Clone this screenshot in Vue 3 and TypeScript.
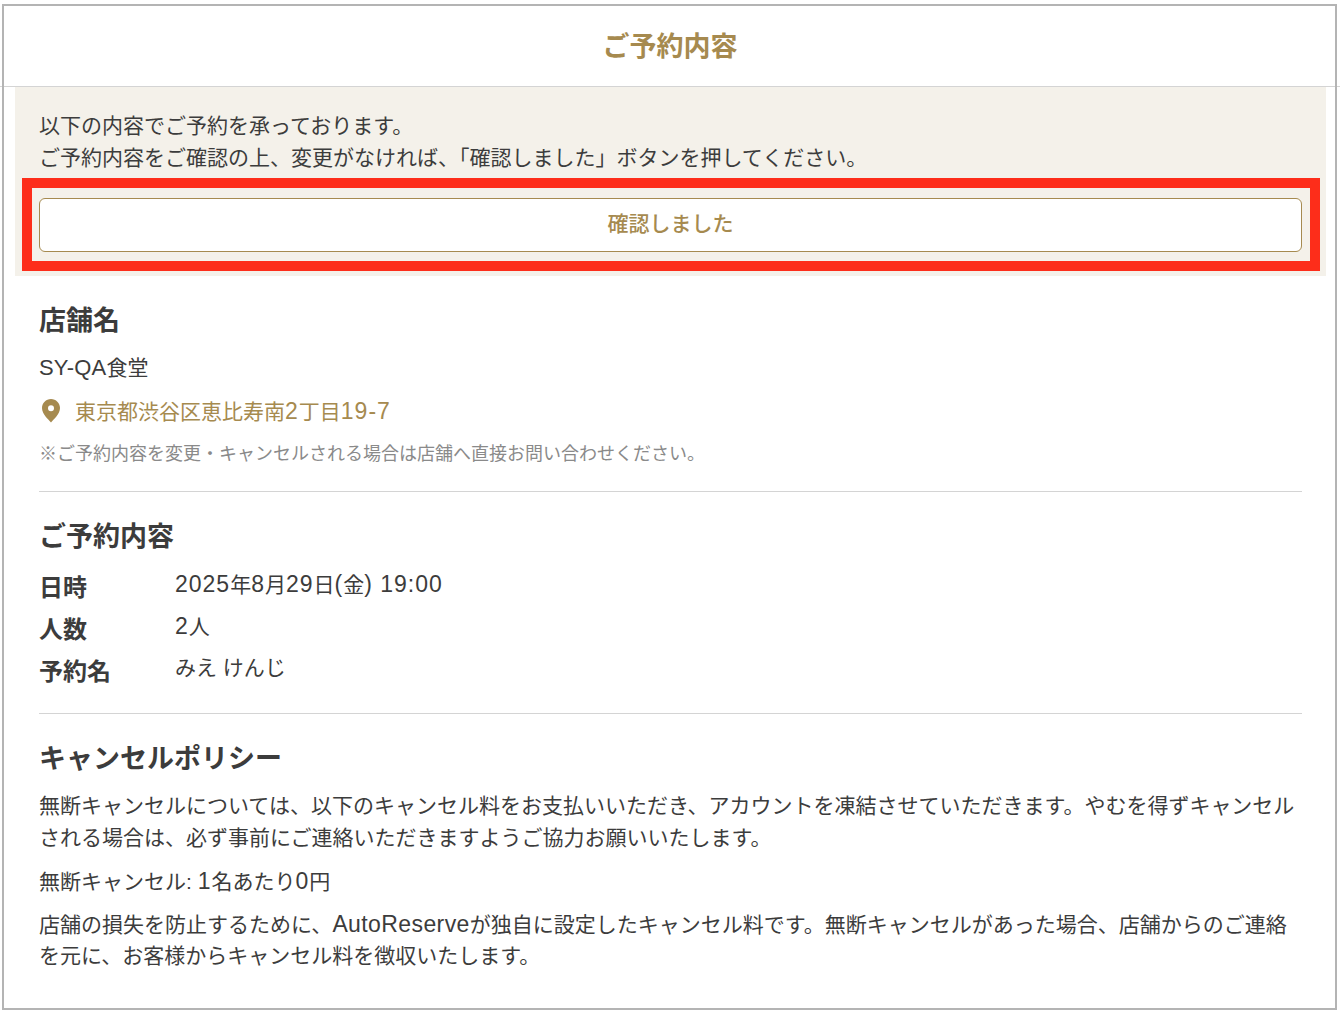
<script setup lang="ts">
const title: string = 'ご予約内容'
</script>

<template>
  <div class="page">
    <div class="frame"></div>
    <header class="title-bar"><h1>{{ title }}</h1></header>
    <section class="banner">
      <p class="banner-text">以下の内容でご予約を承っております。<br />ご予約内容をご確認の上、変更がなければ、「確認しました」ボタンを押してください。</p>
      <div class="highlight">
        <button class="confirm" type="button">確認しました</button>
      </div>
    </section>
    <main class="content">
      <section class="shop">
        <h2>店舗名</h2>
        <p class="shop-name"><span class="latin">SY-QA</span>食堂</p>
        <div class="address">
          <svg width="20" height="25" viewBox="0 0 20 25" aria-hidden="true">
            <path fill-rule="evenodd" fill="#a68a4f" d="M10 1C5 1 1 5 1 10c0 6 6.500 11.500 9 14.500C12.500 21.500 19 16 19 10c0-5-4-9-9-9zm0 6.200a3 3 0 1 1 0 6 3 3 0 0 1 0-6z" />
          </svg>
          <span>東京都渋谷区恵比寿南<span class="num">2</span>丁目<span class="num">19-7</span></span>
        </div>
        <p class="note">※ご予約内容を変更・キャンセルされる場合は店舗へ直接お問い合わせください。</p>
      </section>
      <section class="details">
        <h2>{{ title }}</h2>
        <dl class="rows">
          <div class="row">
            <dt>日時</dt>
            <dd><span class="num">2025</span>年<span class="num">8</span>月<span class="num">29</span>日<span class="num">(</span>金<span class="num">) 19:00</span></dd>
          </div>
          <div class="row">
            <dt>人数</dt>
            <dd><span class="num">2</span>人</dd>
          </div>
          <div class="row">
            <dt>予約名</dt>
            <dd class="name">みえ けんじ</dd>
          </div>
        </dl>
      </section>
      <section class="policy">
        <h2>キャンセルポリシー</h2>
        <p class="para">無断キャンセルについては、以下のキャンセル料をお支払いいただき、アカウントを凍結させていただきます。やむを得ずキャンセルされる場合は、必ず事前にご連絡いただきますようご協力お願いいたします。</p>
        <p class="para fee">無断キャンセル: <span class="num">1</span>名あたり<span class="num">0</span>円</p>
        <p class="para tail">店舗の損失を防止するために、<span class="word">AutoReserve</span>が独自に設定したキャンセル料です。無断キャンセルがあった場合、店舗からのご連絡<br />を元に、お客様からキャンセル料を徴収いたします。</p>
      </section>
    </main>
  </div>
</template>

<style scoped>
.page {
  position: relative;
  width: 1340px;
  height: 1012px;
  overflow: hidden;
  background: #fff;
  color: #3c3c3c;
  font-family: "Liberation Sans", "Noto Sans CJK JP", sans-serif;
  font-size: 21px;
}
.frame {
  position: absolute;
  left: 2px;
  top: 4px;
  width: 1335px;
  height: 1006px;
  box-sizing: border-box;
  border: 2px solid #b4b4b4;
  pointer-events: none;
}
.num {
  font-size: 23px;
  letter-spacing: 1px;
  line-height: 1;
}
.latin {
  font-size: 22px;
  letter-spacing: 0.2px;
  line-height: 1;
}
.word {
  font-size: 23px;
  letter-spacing: 0.4px;
  line-height: 1;
}
.title-bar {
  height: 87px;
  box-sizing: border-box;
  padding-top: 28px;
  border-bottom: 1px solid #d4d4d4;
  text-align: center;
}
h1 {
  margin: 0;
  font-size: 27px;
  line-height: 38px;
  font-weight: 700;
  color: #a68a4f;
}
.banner {
  margin: 0 14px 0 15px;
  height: 189px;
  box-sizing: border-box;
  padding: 23px 6px 0 7px;
  background: #f4f1ea;
}
.banner-text {
  margin: 0 0 5px 17px;
  line-height: 31.5px;
}
.highlight {
  box-sizing: border-box;
  height: 93px;
  border: 10px solid #fd2d1a;
  padding: 10px 8px 9px 7px;
}
.confirm {
  display: block;
  width: 100%;
  height: 54px;
  box-sizing: border-box;
  border: 1px solid #a68a4f;
  border-radius: 6px;
  padding: 0 0 7px;
  background: #fff;
  color: #a68a4f;
  font-family: inherit;
  font-size: 21px;
  font-weight: 500;
}
.content {
  padding: 0 38px 0 39px;
}
h2 {
  margin: 0;
  font-size: 27px;
  line-height: 38px;
  font-weight: 700;
}
.shop {
  padding-top: 26px;
  padding-bottom: 23px;
  border-bottom: 1px solid #d4d4d4;
}
.shop-name {
  margin: 12px 0 0;
  line-height: 32px;
}
.address {
  display: flex;
  align-items: center;
  gap: 14px;
  margin-top: 10px;
  height: 32px;
  padding-left: 2px;
  color: #a68a4f;
  font-weight: 400;
}
.note {
  margin: 15px 0 0;
  font-size: 18px;
  line-height: 27px;
  color: #8a8a8a;
}
.details {
  padding-top: 26px;
  padding-bottom: 20px;
  border-bottom: 1px solid #d4d4d4;
}
.rows {
  margin: 11px 0 0;
}
.row {
  display: flex;
  height: 42px;
  align-items: flex-start;
}
dt {
  width: 136px;
  flex: none;
  font-size: 24px;
  line-height: 36px;
  font-weight: 700;
  padding-top: 3px;
}
dd {
  margin: 0;
  padding-top: 2px;
  line-height: 32px;
}
dd.name {
  padding-top: 1px;
}
.policy {
  padding-top: 26px;
}
.para {
  margin: 12px 0 0;
  line-height: 31.5px;
}
.fee {
  margin-top: 13px;
}
.tail {
  margin-top: 11px;
}
</style>

<style>
body { margin: 0; }
</style>
